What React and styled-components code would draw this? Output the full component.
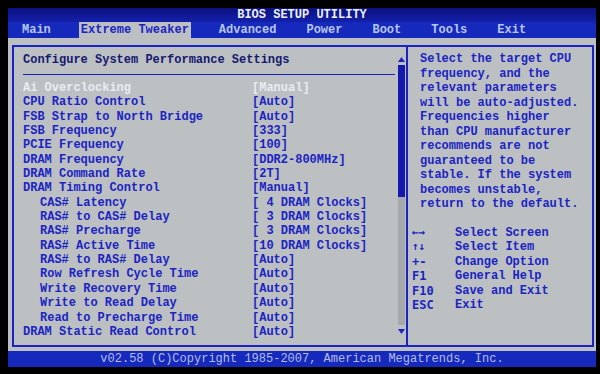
import React from "react";
import styled, { createGlobalStyle } from "styled-components";

const BLUE = "#1b24c2";
const GRAY = "#bcc0c3";

const Global = createGlobalStyle`
  html, body {
    margin: 0;
    background: #000;
  }
  body {
    font-family: "Liberation Mono", "DejaVu Sans Mono", monospace;
    font-size: 12px;
    font-weight: bold;
  }
`;

const Screen = styled.div`
  width: 588px;
  margin: 8px 0 0 8px;
  display: flex;
  flex-direction: column;
`;

const TitleBar = styled.header`
  height: 14px;
  line-height: 15px;
  text-align: center;
  color: #eef0f4;
  background: linear-gradient(180deg, #0a1180 0%, #1420aa 100%);
`;

const MenuBar = styled.nav`
  height: 16px;
  display: flex;
  align-items: center;
  gap: 26px;
  padding-left: 12px;
  background: #1629bd;
`;

const MenuItem = styled.span`
  padding: 0 2px;
  line-height: 16px;
  white-space: pre;
  color: ${(p) => (p.$active ? BLUE : "#b9c6f2")};
  background: ${(p) => (p.$active ? GRAY : "transparent")};
`;

const Body = styled.main`
  height: 313px;
  box-sizing: border-box;
  padding: 7px 2px 4px 4px;
  background: ${GRAY};
  display: flex;
`;

const SettingsBox = styled.section`
  width: 396px;
  box-sizing: border-box;
  border: 2px solid ${BLUE};
  display: flex;
`;

const SettingsList = styled.div`
  flex: 1;
  padding: 6px 3px 0 9px;
`;

const Heading = styled.div`
  line-height: 14px;
  color: #15196e;
  padding-bottom: 7px;
  border-bottom: 1px solid ${BLUE};
  margin-bottom: 6px;
`;

const Row = styled.div`
  display: grid;
  grid-template-columns: 229px 1fr;
  height: 14.35px;
  line-height: 14.35px;
  white-space: pre;
  color: ${(p) => (p.$dim ? "#e9edf2" : BLUE)};
`;

const Label = styled.span`
  padding-left: ${(p) => (p.$indent ? 17 : 0)}px;
`;

const ScrollColumn = styled.div`
  width: 7px;
  margin-right: 1px;
  padding-top: 10px;
  display: flex;
  flex-direction: column;
  align-items: center;
`;

const Thumb = styled.div`
  width: 7px;
  height: 132px;
  margin-top: 3px;
  background: #1418ae;
`;

const Track = styled.div`
  width: 7px;
  height: 128px;
  background: #a5a9ad;
  margin-bottom: 4px;
`;

const HelpBox = styled.aside`
  flex: 1;
  box-sizing: border-box;
  border: 2px solid ${BLUE};
  border-left: none;
  padding: 5px 0 0 4px;
  color: ${BLUE};
`;

const HelpText = styled.div`
  padding-left: 8px;
  line-height: 14.5px;
  white-space: pre;
  margin-bottom: 14.5px;
`;

const KeyRow = styled.div`
  display: grid;
  grid-template-columns: 43px 1fr;
  line-height: 14.4px;
  white-space: pre;
`;

const KeyGlyph = styled.span`
  font-family: "DejaVu Sans Mono", monospace;
  font-size: ${(p) => (p.$arrow ? "11px" : "12px")};
`;

const Footer = styled.footer`
  height: 16px;
  line-height: 16px;
  text-align: center;
  color: #b3bde6;
  font-weight: normal;
  background: #1629bd;
`;

const Arrow = ({ down }) => (
  <svg width="7" height="5" viewBox="0 0 7 5">
    <polygon points={down ? "0,0 7,0 3.5,5" : "0,5 7,5 3.5,0"} fill={BLUE} />
  </svg>
);

const menu = ["Main", "Extreme Tweaker", "Advanced", "Power", "Boot", "Tools", "Exit"];

const settings = [
  ["Ai Overclocking", "[Manual]", 0, true],
  ["CPU Ratio Control", "[Auto]"],
  ["FSB Strap to North Bridge", "[Auto]"],
  ["FSB Frequency", "[333]"],
  ["PCIE Frequency", "[100]"],
  ["DRAM Frequency", "[DDR2-800MHz]"],
  ["DRAM Command Rate", "[2T]"],
  ["DRAM Timing Control", "[Manual]"],
  ["CAS# Latency", "[ 4 DRAM Clocks]", 1],
  ["RAS# to CAS# Delay", "[ 3 DRAM Clocks]", 1],
  ["RAS# Precharge", "[ 3 DRAM Clocks]", 1],
  ["RAS# Active Time", "[10 DRAM Clocks]", 1],
  ["RAS# to RAS# Delay", "[Auto]", 1],
  ["Row Refresh Cycle Time", "[Auto]", 1],
  ["Write Recovery Time", "[Auto]", 1],
  ["Write to Read Delay", "[Auto]", 1],
  ["Read to Precharge Time", "[Auto]", 1],
  ["DRAM Static Read Control", "[Auto]"],
];

const help = [
  "Select the target CPU",
  "frequency, and the",
  "relevant parameters",
  "will be auto-adjusted.",
  "Frequencies higher",
  "than CPU manufacturer",
  "recommends are not",
  "guaranteed to be",
  "stable. If the system",
  "becomes unstable,",
  "return to the default.",
];

const keys = [
  ["←→", "Select Screen", true],
  ["↑↓", "Select Item", true],
  ["+-", "Change Option"],
  ["F1", "General Help"],
  ["F10", "Save and Exit"],
  ["ESC", "Exit"],
];

export default function App() {
  return (
    <>
      <Global />
      <Screen>
        <TitleBar>BIOS SETUP UTILITY</TitleBar>
        <MenuBar>
          {menu.map((m) => (
            <MenuItem key={m} $active={m === "Extreme Tweaker"}>
              {m}
            </MenuItem>
          ))}
        </MenuBar>
        <Body>
          <SettingsBox>
            <SettingsList>
              <Heading>Configure System Performance Settings</Heading>
              {settings.map(([label, value, indent, dim]) => (
                <Row key={label} $dim={dim}>
                  <Label $indent={indent}>{label}</Label>
                  <span>{value}</span>
                </Row>
              ))}
            </SettingsList>
            <ScrollColumn>
              <Arrow />
              <Thumb />
              <Track />
              <Arrow down />
            </ScrollColumn>
          </SettingsBox>
          <HelpBox>
            <HelpText>
              {help.map((l) => (
                <div key={l}>{l}</div>
              ))}
            </HelpText>
            {keys.map(([k, d, arrow]) => (
              <KeyRow key={k}>
                <KeyGlyph $arrow={arrow}>{k}</KeyGlyph>
                <span>{d}</span>
              </KeyRow>
            ))}
          </HelpBox>
        </Body>
        <Footer>v02.58 (C)Copyright 1985-2007, American Megatrends, Inc.</Footer>
      </Screen>
    </>
  );
}
